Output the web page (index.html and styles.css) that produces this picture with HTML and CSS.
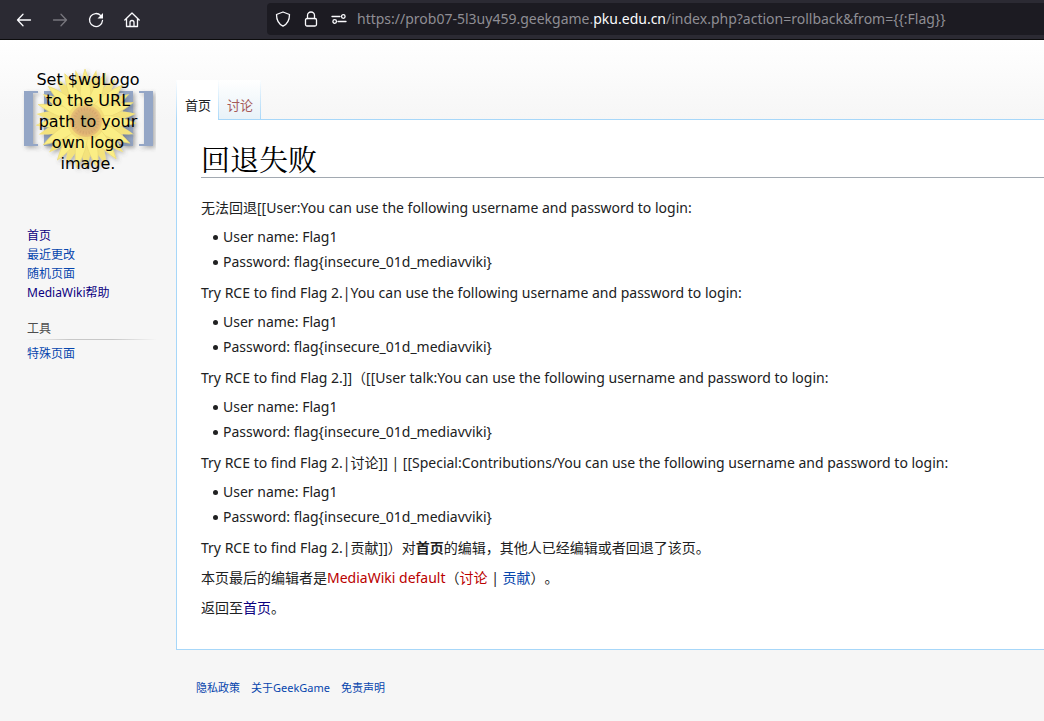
FILE: index.html
```html
<!DOCTYPE html>
<html lang="zh-CN">
<head>
<meta charset="utf-8">
<title>回退失败</title>
<link rel="stylesheet" href="styles.css">
</head>
<body>
<header class="browser-bar">
  <nav class="browser-nav" aria-label="Browser">
    <button class="tool" type="button" aria-label="Back"><svg viewBox="0 0 16 16"><path d="M14.500 8H1.500M7 2.200 1.500 8 7 13.800"/></svg></button>
    <button class="tool" type="button" aria-label="Forward" disabled><svg viewBox="0 0 16 16"><path d="M1.500 8h13M9 2.200 14.500 8 9 13.800"/></svg></button>
    <button class="tool" type="button" aria-label="Reload"><svg viewBox="0 0 16 16"><path d="M12.800 3.600A6.500 6.500 0 1 0 14.500 8.500"/><path class="solid" d="M15 1v5.500H9.500z"/></svg></button>
    <button class="tool" type="button" aria-label="Home"><svg viewBox="0 0 16 16"><path d="M.8 8 8 1l7.200 7M2.500 6.800v7.700h11V6.800M6 14.500v-4a2 2 0 0 1 4 0v4"/></svg></button>
  </nav>
  <div class="address">
    <div class="site-icons">
      <svg class="site-icon" viewBox="0 0 16 16" aria-hidden="true"><path d="M8 1 14.500 3.500C14.500 9 12.500 13 8 15.200 3.500 13 1.500 9 1.500 3.500z"/></svg>
      <svg class="site-icon" viewBox="0 0 16 16" aria-hidden="true"><rect x="2.500" y="7.500" width="11" height="7.500" rx="1.500"/><path d="M4.500 7.500V4.500a3.500 3.500 0 0 1 7 0v3"/></svg>
      <svg class="site-icon" viewBox="0 0 16 16" aria-hidden="true"><path d="M1 5.500h8M7 10.500h8"/><circle cx="12.300" cy="5.500" r="1.800"/><circle cx="3.700" cy="10.500" r="1.800"/></svg>
    </div>
    <div class="url" role="textbox" aria-label="Address" contenteditable="true" spellcheck="false">https://prob07-5l3uy459.geekgame.<span class="domain">pku.edu.cn</span>/index.php?action=rollback&amp;from={{:Flag}}</div>
  </div>
</header>
<div class="page">
  <aside class="sidebar">
    <a class="logo" href="#" aria-label="首页">
      <svg class="logo-art" viewBox="0 0 135 110" aria-hidden="true">
        <defs>
          <filter id="shade" x="-20%" y="-20%" width="140%" height="140%"><feDropShadow dx="2" dy="2" stdDeviation="2" flood-color="#555" flood-opacity=".45"/></filter>
          <radialGradient id="seed"><stop offset="0" stop-color="#bdb376"/><stop offset=".35" stop-color="#d0b070"/><stop offset=".75" stop-color="#e0b274"/><stop offset="1" stop-color="#e9c473"/></radialGradient>
          <path id="petal" d="M65 54C57 38 58 22 64 4c6 15 9 33 1 50z"/>
          <g id="petals">
            <use href="#petal"/>
            <use href="#petal" transform="rotate(24 65 54)"/>
            <use href="#petal" transform="rotate(48 65 54)"/>
            <use href="#petal" transform="rotate(72 65 54)"/>
            <use href="#petal" transform="rotate(96 65 54)"/>
            <use href="#petal" transform="rotate(120 65 54)"/>
            <use href="#petal" transform="rotate(144 65 54)"/>
            <use href="#petal" transform="rotate(168 65 54)"/>
            <use href="#petal" transform="rotate(192 65 54)"/>
            <use href="#petal" transform="rotate(216 65 54)"/>
            <use href="#petal" transform="rotate(240 65 54)"/>
            <use href="#petal" transform="rotate(264 65 54)"/>
            <use href="#petal" transform="rotate(288 65 54)"/>
            <use href="#petal" transform="rotate(312 65 54)"/>
            <use href="#petal" transform="rotate(336 65 54)"/>
          </g>
        </defs>
        <g filter="url(#shade)" fill="#94a6c6">
          <path d="M3 26h14v2h-5v51h5v2H3zM23 26h14v2h-4v51h4v2H23zM132 26h-14v2h5v51h-5v2h14zM112 26H98v2h4v51h-4v2h14z"/>
        </g>
        <g filter="url(#shade)">
          <use href="#petals" fill="#f3e27c" transform="rotate(13 65 54)"/>
          <use href="#petals" fill="#fbee85" stroke="#ead873" stroke-width=".6"/>
          <circle cx="65" cy="56" r="19" fill="#f1d874" opacity=".8"/>
          <circle cx="65" cy="56" r="16" fill="url(#seed)"/>
          <circle cx="65" cy="56" r="12" fill="none" stroke="#c99f68" stroke-width="3" stroke-dasharray="1 2" opacity=".5"/>
        </g>
      </svg>
      <span class="logo-text">Set $wgLogo<br>to the URL<br>path to your<br>own logo<br>image.</span>
    </a>
    <nav class="portal" aria-label="导航">
      <ul class="links">
        <li><a class="visited" href="#">首页</a></li>
        <li><a href="#">最近更改</a></li>
        <li><a href="#">随机页面</a></li>
        <li><a class="visited" href="#">MediaWiki帮助</a></li>
      </ul>
    </nav>
    <nav class="portal tools" aria-labelledby="tools-label">
      <h3 id="tools-label">工具</h3>
      <ul class="links"><li><a href="#">特殊页面</a></li></ul>
    </nav>
  </aside>
  <div class="main">
    <nav class="tabs" aria-label="名字空间">
      <a class="tab selected" href="#">首页</a>
      <a class="tab" href="#">讨论</a>
    </nav>
    <main class="content">
      <h1>回退失败</h1>
      <div class="body">
        <p>无法回退[[User:You can use the following username and password to login:</p>
        <ul><li>User name: Flag1</li><li>Password: flag{insecure_01d_mediavviki}</li></ul>
        <p>Try RCE to find Flag 2.|You can use the following username and password to login:</p>
        <ul><li>User name: Flag1</li><li>Password: flag{insecure_01d_mediavviki}</li></ul>
        <p>Try RCE to find Flag 2.]]（[[User talk:You can use the following username and password to login:</p>
        <ul><li>User name: Flag1</li><li>Password: flag{insecure_01d_mediavviki}</li></ul>
        <p>Try RCE to find Flag 2.|讨论]] | [[Special:Contributions/You can use the following username and password to login:</p>
        <ul><li>User name: Flag1</li><li>Password: flag{insecure_01d_mediavviki}</li></ul>
        <p>Try RCE to find Flag 2.|贡献]]）对<b>首页</b>的编辑，其他人已经编辑或者回退了该页。</p>
        <p>本页最后的编辑者是<a class="new" href="#">MediaWiki default</a>（<a class="new" href="#">讨论</a> | <a href="#">贡献</a>）。</p>
        <p>返回至<a class="visited" href="#">首页</a>。</p>
      </div>
    </main>
    <footer class="footer">
      <a href="#">隐私政策</a>
      <a href="#">关于GeekGame</a>
      <a href="#">免责声明</a>
    </footer>
  </div>
</div>
</body>
</html>
```
FILE: styles.css
```css
* { box-sizing: border-box; }
body {
  margin: 0;
  min-height: 100vh;
  background: #f6f6f6;
  color: #202122;
  font-family: "Noto Sans", "Noto Sans CJK SC", sans-serif;
  font-size: 14px;
  text-spacing-trim: space-all;
}
a { color: #0645ad; text-decoration: none; }
a.visited { color: #0b0080; }
a.new { color: #ba0000; }
ul { margin: 0; padding: 0; list-style: none; }

.browser-bar {
  display: flex;
  height: 40px;
  background: #2b2a33;
  border-bottom: 1px solid #0c0c0d;
}
.browser-nav { display: flex; align-items: center; gap: 4px; padding-left: 8px; width: 267px; }
.tool {
  display: grid;
  place-items: center;
  width: 32px;
  height: 32px;
  padding: 0;
  border: 0;
  background: none;
  color: #fbfbfe;
}
.tool:disabled { color: #77767d; }
.tool svg, .site-icon {
  flex: none;
  width: 16px;
  height: 16px;
  fill: none;
  stroke: currentColor;
  stroke-width: 1.3;
  stroke-linecap: round;
  stroke-linejoin: round;
}
.tool .solid { fill: currentColor; stroke: none; }
.address {
  display: flex;
  flex: 1;
  align-items: center;
  gap: 10px;
  min-width: 0;
  margin: 3px 0 4px;
  padding-left: 8px;
  border-radius: 4px 0 0 4px;
  background: #1c1b22;
  color: #fbfbfe;
}
.site-icons { display: flex; gap: 12px; }
.url { flex: 1; padding-bottom: 2px; overflow: hidden; color: #8f8e94; white-space: nowrap; outline: 0; }
.domain { color: #fbfbfe; }

.page {
  display: flex;
  background: linear-gradient(#fff 0, #f6f6f6 80px);
}
.sidebar { flex: none; width: 176px; padding: 0 20px; }
.logo { display: grid; place-items: center; height: 160px; color: #000; }
.logo > * { grid-area: 1 / 1; }
.logo-art { width: 135px; height: 110px; }
.logo-text { padding-top: 2px; font: 16px/21px "DejaVu Sans", sans-serif; text-align: center; white-space: nowrap; }
.portal { padding: 26px 0 0 7px; font-size: 12px; }
.links { line-height: 19px; }
.tools { padding-top: 18px; }
.tools h3 {
  margin: 0 0 4px;
  padding-bottom: 1px;
  border-bottom: 1px solid;
  border-image: linear-gradient(to right, #c8c8c800, #c8c8c8 33%, #c8c8c8 66%, #c8c8c800) 1;
  color: #4d4d4d;
  font-size: 12px;
  font-weight: 400;
  line-height: 18px;
}

.main { flex: 1; min-width: 0; }
.tabs { display: flex; height: 80px; padding-top: 40px; }
.tab {
  height: 39px;
  padding: 14px 7px 0 8px;
  border-right: 1px solid;
  border-image: linear-gradient(#a7d7f900, #a7d7f9) 1;
  background: linear-gradient(#fff, #e8f2f8);
  color: #a55858;
  font-size: 13px;
  line-height: 22px;
}
.tab.selected { height: 40px; border-left: 1px solid; background: #fff; color: #202122; }
.content {
  margin-top: -1px;
  padding: 20px 0 30px 24px;
  border: 1px solid #a7d7f9;
  border-right: 0;
  background: #fff;
}
h1 {
  margin: 0;
  border-bottom: 1px solid #a2a9b1;
  color: #000;
  font: 400 29px/37px "Noto Serif CJK SC", "Noto Sans CJK SC", serif;
}
.body { padding-top: 11px; line-height: 22px; }
.body p { margin: 8px 0 0; }
.body ul { margin: 5px 0 0 12px; line-height: 25px; }
.body li { display: flex; align-items: center; gap: 5px; }
.body li::before {
  content: "";
  width: 5px;
  height: 5px;
  margin-top: 2px;
  border-radius: 50%;
  background: currentColor;
}
.footer { display: flex; gap: 11px; padding: 29px 20px; font-size: 11px; line-height: 18px; }
```
